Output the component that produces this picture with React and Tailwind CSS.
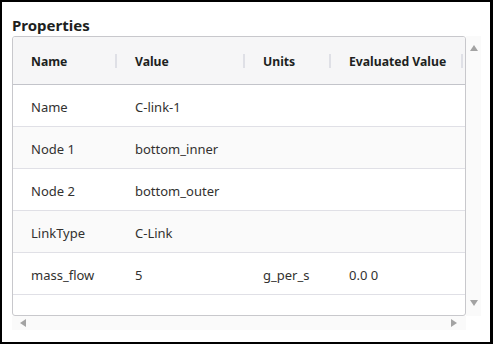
import React from "react";

const rows = [
  ["Name", "C-link-1", "", ""],
  ["Node 1", "bottom_inner", "", ""],
  ["Node 2", "bottom_outer", "", ""],
  ["LinkType", "C-Link", "", ""],
  ["mass_flow", "5", "g_per_s", "0.0 0"],
];

const cols = ["w-[104px]", "w-[128px]", "w-[86px]", "w-[132px]"];
const heads = ["Name", "Value", "Units", "Evaluated Value"];

function Tri({ dir }) {
  const pts = {
    up: "0,6 4,0 8,6",
    down: "0,0 8,0 4,6",
    left: "6,0 6,8 0,4",
    right: "0,0 0,8 6,4",
  }[dir];
  const w = dir === "up" || dir === "down" ? 8 : 6;
  const h = dir === "up" || dir === "down" ? 6 : 8;
  return (
    <svg width={w} height={h} viewBox={`0 0 ${w} ${h}`}>
      <polygon points={pts} fill="#a3a3a3" />
    </svg>
  );
}

export default function App() {
  return (
    <div
      className="w-[493px] h-[344px] border-2 border-r-[3px] border-black bg-white flex flex-col"
      style={{ fontFamily: '"Noto Sans", "Open Sans", sans-serif' }}
    >
      <div className="pl-[10px] pt-[13px] h-[34px] text-[15px] font-bold leading-[20px] text-[#201f1e]">
        Properties
      </div>
      <div className="ml-[10px] w-[469px] h-[294px] grid grid-cols-[454px_15px] grid-rows-[280px_14px]">
        <div className="border border-[#c8c8cc] rounded-[3px] overflow-hidden bg-white">
          <div className="flex h-[48px] bg-[#f6f6f7] border-b border-[#c3c4ca] items-center">
            {heads.map((h, i) => (
              <div key={h} className={`${cols[i]} shrink-0 flex items-center justify-between h-full`}>
                <span className="pl-[18px] pt-[4px] text-[12.2px] font-bold text-[#201f1e]">{h}</span>
                <span className="w-[2px] h-[14px] bg-[#dfe0e6]" />
              </div>
            ))}
          </div>
          {rows.map((r, ri) => (
            <div
              key={ri}
              className={`flex h-[42px] items-center pt-[4px] border-b border-[#e0e0e6] ${ri % 2 === 1 ? "bg-[#fafafa]" : "bg-white"}`}
            >
              {r.map((c, ci) => (
                <div key={ci} className={`${cols[ci]} shrink-0 pl-[18px] text-[13px] text-[#323130]`}>
                  {c}
                </div>
              ))}
            </div>
          ))}
        </div>
        <div className="bg-[#fafafa] flex flex-col items-center justify-between pt-[9px] pb-[10px]">
          <Tri dir="up" />
          <Tri dir="down" />
        </div>
        <div className="bg-[#fafafa] flex items-center justify-between pl-[8px] pr-[9px]">
          <Tri dir="left" />
          <Tri dir="right" />
        </div>
        <div className="bg-white" />
      </div>
    </div>
  );
}
